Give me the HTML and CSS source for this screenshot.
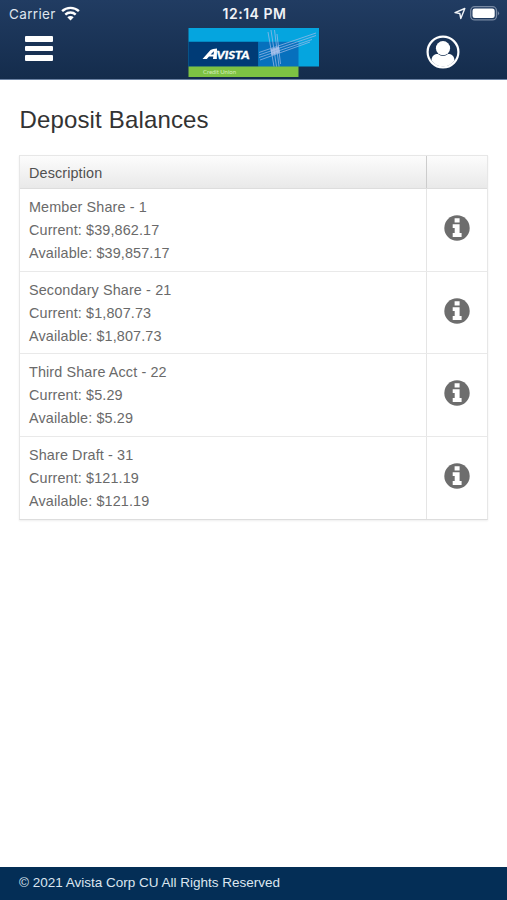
FILE: index.html
```html
<!DOCTYPE html>
<html lang="en">
<head>
<meta charset="utf-8">
<title>Deposit Balances</title>
<link rel="stylesheet" href="styles.css">
</head>
<body>
<svg width="0" height="0" class="defs" aria-hidden="true">
  <symbol id="info" viewBox="0 0 26 26">
    <circle cx="13" cy="13" r="12.7" fill="#6d6d6d"/>
    <path fill="#fff" d="M10.600 3.300h5v4.300h-5zM8.700 9.200h6.900v8.900h2v3.900H8.700v-3.900h2v-5h-2z"/>
  </symbol>
</svg>
<header class="top">
  <div class="status">
    <div class="carrier"><span>Carrier</span>
      <svg width="19" height="15" viewBox="0 0 19 15" fill="none" stroke="#fff" stroke-width="2.4"><path d="M1.1 5.2C5.8.7 13.2.7 17.9 5.2M4.3 8.6C7.2 5.8 11.8 5.8 14.7 8.6"/><path fill="#fff" stroke="none" d="M6.3 11.3Q9.500 8.600 12.700 11.300L9.500 14.500z"/></svg>
    </div>
    <div class="clock">12:14 PM</div>
    <div class="power">
      <svg width="12" height="13" viewBox="0 0 12 13" fill="none" stroke="#f2f5f8" stroke-width="1.400" stroke-linejoin="round"><path d="M1 5.600L10.800 1.500L6.800 11.500L5.800 6.500z"/></svg>
      <svg width="30" height="15" viewBox="0 0 30 15"><rect x=".7" y=".7" width="25.800" height="13.200" rx="4" fill="none" stroke="#7889a3" stroke-width="1.300"/><rect x="2.500" y="2.500" width="22.200" height="9.600" rx="2.300" fill="#fff"/><path d="M27.800 5q2.500 2.300 0 4.600z" fill="#7889a3"/></svg>
    </div>
  </div>
  <nav class="bar">
    <div class="menu"><i></i><i></i><i></i></div>
    <svg class="logo" width="131" height="49" viewBox="0 0 131 49">
      <path fill="#05a5df" d="M.5 0H131v38.500H.5z"/>
      <path fill="#003b76" d="M.5 13.800h70v25H.5z"/>
      <path fill="#0670bd" d="M70.500 13.800h40v25h-40z"/>
      <path fill="#7dc243" d="M.5 38.500h110V49H.5z"/>
      <g fill="none" stroke="#9fbcea" stroke-width=".9" opacity=".8">
        <path d="M80 4L86 38.500M83 2L88.500 38.500M86.500 2L91 38.500M89 6L92.500 36"/>
        <path d="M71 24.500L128 5M71 27L128 7.500M71 29.500L124 11.500M72 32L122 14"/>
      </g>
      <path fill="#b8c8ef" opacity=".75" d="M82.500 21l8.500-2.500 1 6-8.500 3z"/>
      <path fill="#fff" d="M14.500 31L22.500 22Q24.500 20.500 29 20.500L28.800 31H25L25.300 28.500H21L18.800 31zM22.500 26.500H25.500L26 23.200z"/>
      <text class="logo-name" x="28.500" y="31" textLength="33" lengthAdjust="spacingAndGlyphs">VISTA</text>
      <text class="logo-sub" x="15" y="46" textLength="33">Credit Union</text>
    </svg>
    <svg class="user" width="34" height="34" viewBox="0 0 34 34"><circle cx="17" cy="17" r="15.400" fill="none" stroke="#fff" stroke-width="2.200"/><path fill="#fff" d="M5.500 25.500C5.700 20.600 8.500 19 12 19Q17 22.800 22 19C25.500 19 28.300 20.600 28.500 25.500Q24 31.500 17 31.500T5.500 25.500z"/><circle cx="17" cy="13.200" r="7.100" fill="#fff"/></svg>
  </nav>
</header>
<main>
  <h1>Deposit Balances</h1>
  <div class="table">
    <div class="row head"><div class="desc">Description</div><div class="action"></div></div>
    <div class="row"><div class="desc"><p>Member Share - 1</p><p>Current: $39,862.17</p><p>Available: $39,857.17</p></div><div class="action"><svg width="26" height="26"><use href="#info"/></svg></div></div>
    <div class="row"><div class="desc"><p>Secondary Share - 21</p><p>Current: $1,807.73</p><p>Available: $1,807.73</p></div><div class="action"><svg width="26" height="26"><use href="#info"/></svg></div></div>
    <div class="row"><div class="desc"><p>Third Share Acct - 22</p><p>Current: $5.29</p><p>Available: $5.29</p></div><div class="action"><svg width="26" height="26"><use href="#info"/></svg></div></div>
    <div class="row"><div class="desc"><p>Share Draft - 31</p><p>Current: $121.19</p><p>Available: $121.19</p></div><div class="action"><svg width="26" height="26"><use href="#info"/></svg></div></div>
  </div>
</main>
<footer>© 2021 Avista Corp CU All Rights Reserved</footer>
</body>
</html>
```
FILE: styles.css
```css
* { box-sizing: border-box; }
body {
  margin: 0;
  height: 900px;
  display: flex;
  flex-direction: column;
  background: #fff;
  font-family: "Liberation Sans", Arial, sans-serif;
  overflow: hidden;
}
.defs { position: absolute; }
.top {
  height: 80px;
  flex: none;
  background: linear-gradient(#213c62, #142c4c);
  border-bottom: 1px solid #6b82a3;
}
.status {
  height: 28px;
  display: grid;
  grid-template-columns: 1fr auto 1fr;
  align-items: center;
  padding: 0 7px 0 9px;
  color: #fff;
  font: 13.5px/28px Inter, sans-serif;
}
.carrier { display: flex; align-items: center; gap: 5px; color: #dfe5ed; letter-spacing: .35px; }
.carrier svg { margin-top: -2px; }
.clock { font-weight: 600; font-size: 14px; letter-spacing: .5px; color: #f0f3f7; }
.power { display: flex; align-items: center; justify-content: flex-end; gap: 4px; margin-top: -2px; }
.bar { display: grid; grid-template-columns: 1fr 131px 1fr; height: 49px; }
.menu { display: flex; flex-direction: column; gap: 4px; padding: 8px 0 0 25px; }
.menu i { width: 28px; height: 5.5px; border-radius: 1px; background: #fff; }
.logo { display: block; }
.logo-name { font: italic 900 10.5px Lato, sans-serif; fill: #fff; stroke: #fff; stroke-width: .3px; }
.logo-sub { font: 6px Lato, sans-serif; fill: #d5ecb8; }
.user { justify-self: end; margin: 7px 47px 0 0; }
main { flex: 1; padding: 25px 19px 0; }
h1 {
  margin: 0;
  padding-left: .5px;
  font-size: 24px;
  font-weight: 400;
  line-height: 30px;
  letter-spacing: .15px;
  color: #333;
}
.table {
  margin-top: 20px;
  border: 1px solid #e7e7e7;
  border-bottom-color: #ddd;
  box-shadow: 0 1px 2px #eee;
  font-size: 14.4px;
  letter-spacing: .12px;
  color: #6a6a6a;
}
.row { display: flex; height: 82.5px; border-bottom: 1px solid #e9e9e9; }
.row:last-child { border-bottom: 0; }
.desc { flex: 1; padding: 7px 9px 0; }
.desc p { margin: 0; line-height: 23.2px; }
.action {
  width: 61px;
  display: flex;
  align-items: center;
  justify-content: center;
  border-left: 1px solid #e5e5e5;
}
.action svg { margin-top: -3px; }
.row.head {
  height: 33px;
  color: #505050;
  background: linear-gradient(#fcfcfc, #e9e9e9);
  border-bottom-color: #ddd;
}
.head .desc { padding-top: 0; line-height: 35px; }
.head .action { border-left-color: #ccc; }
footer {
  height: 33px;
  flex: none;
  padding-left: 19px;
  background: #042e56;
  color: #dce6f0;
  font-size: 13.5px;
  line-height: 31px;
}
```
